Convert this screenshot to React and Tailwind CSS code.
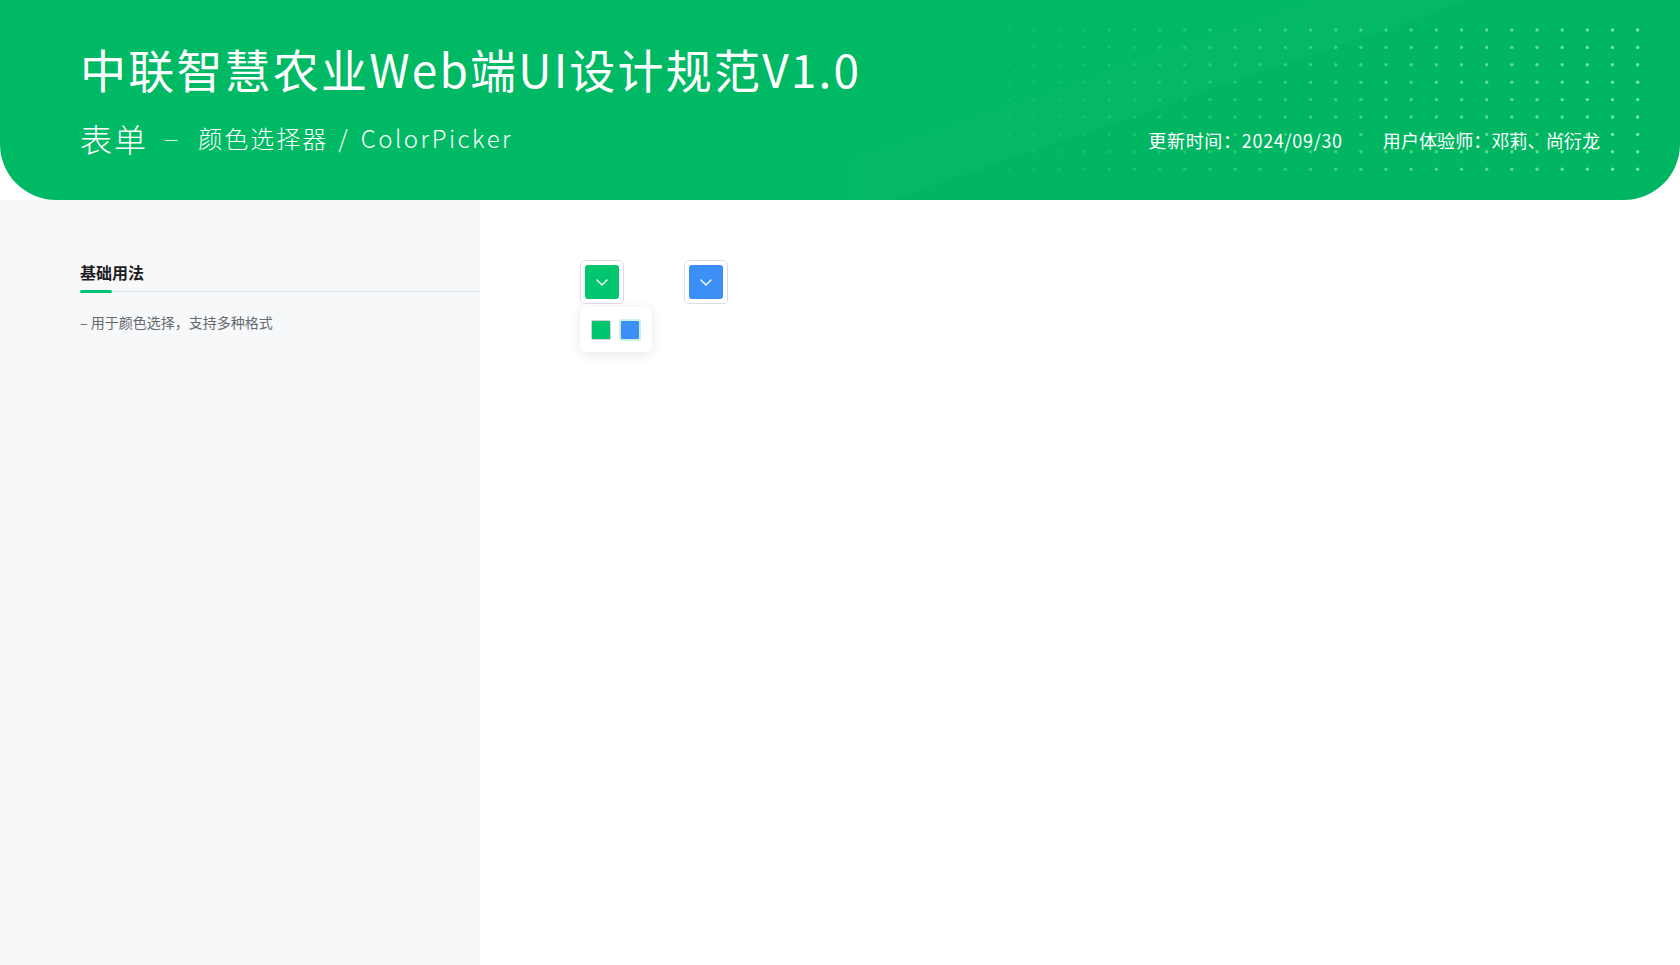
import React from "react";

const FONT = { fontFamily: '"Noto Sans CJK SC", "Noto Sans", sans-serif' };

function Dots() {
  const cols = 30;
  const rows = 9;
  const circles = [];
  for (let c = 0; c < cols; c++) {
    const x = 908 + c * 25.16;
    const t = Math.max(0, Math.min(1, (x - 885) / 755));
    const op = Math.pow(t, 1.3) * 0.9;
    for (let r = 0; r < rows; r++) {
      circles.push(
        <circle key={c + "-" + r} cx={x - 850} cy={30 + r * 17.4} r={1.7} fill="#80f29c" opacity={op} />
      );
    }
  }
  return (
    <svg className="absolute left-[850px] top-0 pointer-events-none" width="830" height="200" viewBox="0 0 830 200">
      <polygon points="40,200 620,0 830,0 830,200" fill="#000000" opacity="0.015" />
      <polygon points="-120,200 460,0 620,0 40,200" fill="#ffffff" opacity="0.012" />
      {circles}
    </svg>
  );
}

function Chevron() {
  return (
    <svg width="12" height="7" viewBox="0 0 12 7" fill="none">
      <polyline points="1,1 6,6 11,1" stroke="#ffffff" strokeWidth="1.4" strokeLinecap="round" strokeLinejoin="round" />
    </svg>
  );
}

function Picker({ color, children }) {
  return (
    <div className="relative">
      <div className="w-[44px] h-[44px] border border-[#dcdfe6] rounded-[5px] p-[4px] bg-white">
        <div className="w-full h-full rounded-[3px] flex items-center justify-center" style={{ backgroundColor: color }}>
          <Chevron />
        </div>
      </div>
      {children}
    </div>
  );
}

export default function App() {
  return (
    <div className="w-[1680px] h-[965px] bg-white flex flex-col overflow-hidden" style={FONT}>
      <header className="relative h-[200px] bg-[#00b964] rounded-b-[56px] overflow-hidden flex flex-col px-[80px] shrink-0">
        <Dots />
        <h1 className="relative mt-[37px] text-[46px] leading-[62px] font-normal text-white tracking-[2.2px]">
          中联智慧农业Web端UI设计规范V1.0
        </h1>
        <div className="relative mt-[19px] flex items-end justify-between">
          <div className="flex items-center text-white font-light">
            <span className="text-[32px] leading-[40px] tracking-[2px]">表单</span>
            <span className="ml-[16px] text-[16px] leading-[40px]">—</span>
            <span className="ml-[20px] text-[24px] leading-[40px] tracking-[2px]">颜色选择器</span>
            <span className="ml-[10px] text-[24px] leading-[40px]">/</span>
            <span className="ml-[13px] text-[24px] leading-[40px] tracking-[2.5px]">ColorPicker</span>
          </div>
          <div className="flex items-center gap-[40px] text-white text-[18px] leading-[36px]">
            <span className="tracking-[0.7px]">更新时间：2024/09/30</span>
            <span className="tracking-[0.1px]">用户体验师：邓莉、尚衍龙</span>
          </div>
        </div>
      </header>
      <div className="flex flex-1">
        <aside className="w-[480px] bg-[#f7f8fa] pl-[80px] pt-[60px] shrink-0">
          <div className="relative border-b border-[#dcdfe6] pb-[7px]">
            <div className="text-[16px] leading-[24px] font-bold text-[#1d1d1f]">基础用法</div>
            <div className="absolute left-0 bottom-[-2px] w-[32px] h-[3px] rounded-full bg-[#00c76f]" />
          </div>
          <p className="mt-[19px] text-[14px] leading-[22px] text-[#666a70]">– 用于颜色选择，支持多种格式</p>
        </aside>
        <main className="flex-1 pl-[100px] pt-[60px]">
          <div className="flex gap-[60px]">
            <Picker color="#00c76f">
              <div className="absolute left-0 top-[47px] w-[72px] h-[45px] bg-white rounded-[6px] shadow-[0_2px_12px_rgba(0,0,0,0.1)] flex items-center pl-[11px] gap-[8px]">
                <div className="w-[20px] h-[20px] rounded-[2px] bg-[#00c76f] border border-[#d0d4da]" />
                <div className="w-[22px] h-[22px] rounded-[3px] bg-[#c9f2dc] p-[2px]">
                  <div className="w-full h-full rounded-[1px] bg-[#3b8ff6]" />
                </div>
              </div>
            </Picker>
            <Picker color="#3b8ff6" />
          </div>
        </main>
      </div>
    </div>
  );
}
